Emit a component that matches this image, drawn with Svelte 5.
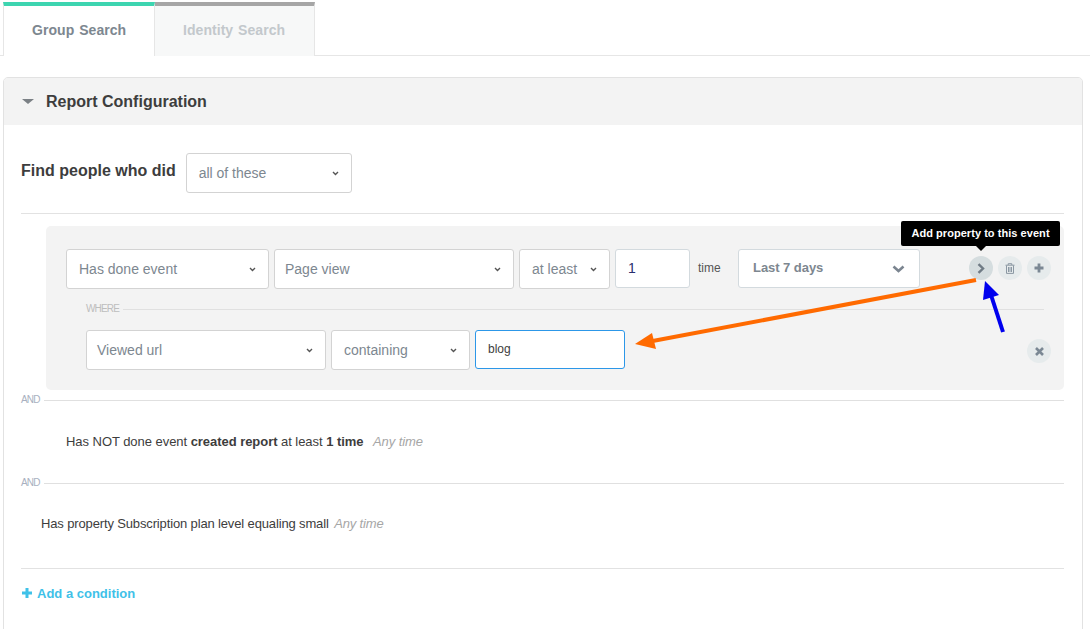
<script>
  const row1 = [
    { label: 'Has done event', w: 203 },
    { label: 'Page view', w: 240, pad: 10 },
    { label: 'at least', w: 91 }
  ];
  const row2 = [
    { label: 'Viewed url', w: 240, pad: 10 },
    { label: 'containing', w: 139 }
  ];
</script>

{#snippet caret()}
  <svg class="mini" width="7" height="5" viewBox="0 0 7 5"><path d="M1 1 L3.5 3.5 L6 1" fill="none" stroke="#555" stroke-width="1.4"/></svg>
{/snippet}

{#snippet select(item)}
  <div class="select" style="width:{item.w}px" class:tight={item.pad}>
    <span>{item.label}</span>
    {@render caret()}
  </div>
{/snippet}

<div class="page">
  <div class="tabs">
    <div class="tab active">Group Search</div>
    <div class="tab">Identity Search</div>
  </div>

  <section class="panel">
    <header class="panel-head">
      <svg width="12" height="5" viewBox="0 0 12 5"><path d="M0 0 H12 L6 5 Z" fill="#7b8085"/></svg>
      <h2>Report Configuration</h2>
    </header>

    <div class="panel-body">
      <div class="find">
        <strong>Find people who did</strong>
        <div class="select find-select"><span>all of these</span>{@render caret()}</div>
      </div>

      <div class="group">
        <div class="row first">
          {#each row1 as item}{@render select(item)}{/each}
          <div class="input count">1</div>
          <span class="time">time</span>
          <div class="date">
            <span>Last 7 days</span>
            <svg width="13" height="8" viewBox="0 0 13 8"><path d="M1.5 1.5 L6.5 6 L11.5 1.5" fill="none" stroke="#7b8590" stroke-width="2.6"/></svg>
          </div>
          <div class="actions">
            <button class="round on" aria-label="Add property">
              <svg width="8" height="11" viewBox="0 0 8 11"><path d="M1.5 1.2 L6 5.5 L1.5 9.8" fill="none" stroke="#6f7b85" stroke-width="2.4"/></svg>
            </button>
            <button class="round" aria-label="Delete">
              <svg width="10" height="11" viewBox="0 0 10 11"><path d="M0.5 2.2 H9.5 M3.2 2 V0.7 H6.8 V2 M1.5 2.5 V10.4 H8.5 V2.5 M3.5 4 V9 M5 4 V9 M6.5 4 V9" fill="none" stroke="#8b98a3" stroke-width="1"/></svg>
            </button>
            <button class="round" aria-label="Add">
              <svg width="10" height="10" viewBox="0 0 10 10"><path d="M5 0.5 V9.5 M0.5 5 H9.5" fill="none" stroke="#7b8894" stroke-width="2.8"/></svg>
            </button>
          </div>
        </div>

        <div class="where"><span>WHERE</span><i></i></div>

        <div class="row second">
          {#each row2 as item}{@render select(item)}{/each}
          <div class="input focus">blog</div>
          <button class="round close" aria-label="Remove">
            <svg width="9" height="9" viewBox="0 0 9 9"><path d="M1 1 L8 8 M8 1 L1 8" fill="none" stroke="#7b8894" stroke-width="2.6"/></svg>
          </button>
        </div>
      </div>

      <div class="and"><span>AND</span><i></i></div>
      <p class="cond one">Has NOT done event <b>created report</b> at least <b>1 time</b> <em>Any time</em></p>
      <div class="and two"><span>AND</span><i></i></div>
      <p class="cond three">Has property Subscription plan level equaling small <em>Any time</em></p>
      <div class="foot">
        <a href="#add" class="add">
          <svg width="10" height="10" viewBox="0 0 10 10"><path d="M5 0 V10 M0 5 H10" fill="none" stroke="#3fc1e8" stroke-width="3"/></svg>
          Add a condition
        </a>
      </div>
    </div>
  </section>

  <div class="tooltip">Add property to this event</div>

  <svg class="annot" width="1090" height="629" viewBox="0 0 1090 629">
    <path d="M976 280 L650 341.5" stroke="#ff6a00" stroke-width="4" fill="none"/>
    <path d="M635 344 L652 333 L656 349 Z" fill="#ff6a00"/>
    <path d="M1003 332 L991 295" stroke="#0000ee" stroke-width="4" fill="none"/>
    <path d="M985 281 L983 300 L999 295 Z" fill="#0000ee"/>
  </svg>
</div>

<style>
  :global(body) {
    margin: 0;
    overflow: hidden;
    background: #fff;
  }
  .page {
    position: relative;
    width: 1090px;
    height: 629px;
    overflow: hidden;
    font-family: "Liberation Sans", Arial, sans-serif;
    color: #3d3d3d;
    box-sizing: border-box;
  }
  .tabs {
    display: flex;
    height: 53px;
    padding: 2px 0 0 3px;
    border-bottom: 1px solid #e6e6e6;
  }
  .tab {
    box-sizing: border-box;
    height: 54px;
    width: 160px;
    padding: 16px 0 0 28px;
    border-top: 4px solid #a6a6a6;
    border-right: 1px solid #e6e6e6;
    background: #f7f8f8;
    font-size: 14px;
    font-weight: 700;
    letter-spacing: 0.05px;
    word-spacing: 1px;
    color: #c3c8cc;
  }
  .tab.active {
    width: 152px;
    border-top-color: #3dd5b0;
    border-left: 1px solid #e6e6e6;
    border-right: 1px solid #e6e6e6;
    background: #fff;
    color: #7d8790;
    padding-left: 28px;
  }
  .panel {
    box-sizing: border-box;
    margin: 21px 0 0 3px;
    width: 1080px;
    height: 600px;
    border: 1px solid #e2e2e2;
    border-radius: 5px 5px 0 0;
  }
  .panel-head {
    display: flex;
    align-items: center;
    gap: 12px;
    height: 47px;
    padding-left: 18px;
    background: #f3f3f3;
    border-radius: 4px 4px 0 0;
  }
  .panel-head h2 {
    margin: 0;
    font-size: 16px;
    font-weight: 700;
    color: #3d3d3d;
  }
  .panel-body {
    padding: 0 18px 0 17px;
  }
  .find {
    display: flex;
    align-items: flex-start;
    gap: 10px;
    height: 89px;
    padding-top: 28px;
    box-sizing: border-box;
    border-bottom: 1px solid #e2e2e2;
  }
  .find strong {
    font-size: 16px;
    line-height: 36px;
    color: #3d3d3d;
  }
  .select {
    box-sizing: border-box;
    height: 40px;
    display: flex;
    align-items: center;
    justify-content: space-between;
    padding: 0 12px;
    background: #fff;
    border: 1px solid #d3d3d3;
    border-radius: 3px;
    font-size: 14px;
    color: #7d8790;
    flex: none;
  }
  .select.tight {
    padding-left: 10px;
  }
  .find-select {
    width: 166px;
  }
  .group {
    box-sizing: border-box;
    margin: 12px 0 0 25px;
    width: 1018px;
    height: 164px;
    padding: 23px 13px 0 20px;
    background: #f3f3f3;
    border-radius: 5px;
  }
  .row {
    display: flex;
    align-items: flex-start;
    gap: 5px;
  }
  .input {
    box-sizing: border-box;
    height: 39px;
    width: 75px;
    padding: 0 12px;
    line-height: 36px;
    background: #fff;
    border: 1px solid #d3dade;
    border-radius: 3px;
    font-size: 14px;
    color: #2a2f6e;
    flex: none;
  }
  .time {
    font-size: 12px;
    line-height: 38px;
    margin-left: 3px;
    width: 35px;
    color: #555;
    flex: none;
  }
  .date {
    box-sizing: border-box;
    width: 182px;
    height: 39px;
    display: flex;
    align-items: center;
    justify-content: space-between;
    padding: 0 14px;
    background: #fff;
    border: 1px solid #d3dade;
    border-radius: 3px;
    font-size: 13px;
    font-weight: 700;
    color: #7d8790;
    flex: none;
  }
  .date span {
    padding-bottom: 2px;
    letter-spacing: -0.05px;
  }
  .actions {
    display: flex;
    gap: 5px;
    margin: 7px 0 0 44px;
  }
  .round {
    box-sizing: border-box;
    width: 24px;
    height: 24px;
    padding: 0;
    display: flex;
    align-items: center;
    justify-content: center;
    border: 0;
    border-radius: 50%;
    background: #e6ebec;
    flex: none;
  }
  .round.on {
    background: #d5dddf;
  }
  .where {
    display: flex;
    align-items: center;
    gap: 4px;
    height: 18px;
    margin: 10px 7px 0 20px;
    font-size: 10px;
    letter-spacing: -0.85px;
    color: #bdbdbd;
  }
  .where i, .and i {
    flex: 1;
    height: 1px;
    background: #e0e0e0;
  }
  .where i {
    margin-top: 2px;
  }
  .second {
    margin: 13px 0 0 20px;
  }
  .input.focus {
    width: 150px;
    border-color: #2c97e8;
    font-size: 12px;
    color: #3d3d3d;
  }
  .close {
    margin: 9px 0 0 397px;
  }
  .and {
    display: flex;
    align-items: center;
    gap: 4px;
    height: 20px;
    font-size: 10px;
    letter-spacing: -0.85px;
    color: #a8b0c0;
  }
  .and span {
    padding-bottom: 1px;
  }
  .cond {
    margin: 0;
    font-size: 13px;
    line-height: 16px;
    color: #3d3d3d;
  }
  .cond em {
    color: #a6a6a6;
    margin-left: 3px;
    letter-spacing: -0.1px;
  }
  .one {
    padding: 24px 0 23px 45px;
    letter-spacing: -0.045px;
  }
  .one em {
    margin-left: 6px;
  }
  .three {
    padding: 23px 0 0 20px;
    letter-spacing: -0.14px;
  }
  .three em {
    margin-left: 2px;
    letter-spacing: -0.15px;
  }
  .foot {
    margin-top: 36px;
    padding-top: 15px;
    border-top: 1px solid #e2e2e2;
  }
  .add {
    display: inline-flex;
    align-items: center;
    gap: 5px;
    margin-left: 1px;
    font-size: 13px;
    font-weight: 700;
    color: #3fc1e8;
    text-decoration: none;
  }
  .tooltip {
    position: absolute;
    left: 901px;
    top: 221px;
    width: 159px;
    height: 25px;
    line-height: 25px;
    text-align: center;
    background: #000;
    color: #fff;
    font-size: 11px;
    font-weight: 700;
    letter-spacing: 0.05px;
    border-radius: 2px;
  }
  .tooltip::after {
    content: "";
    position: absolute;
    left: 75px;
    top: 25px;
    border: 5px solid transparent;
    border-top-color: #000;
    border-bottom: 0;
  }
  .annot {
    position: absolute;
    left: 0;
    top: 0;
    pointer-events: none;
  }
</style>
